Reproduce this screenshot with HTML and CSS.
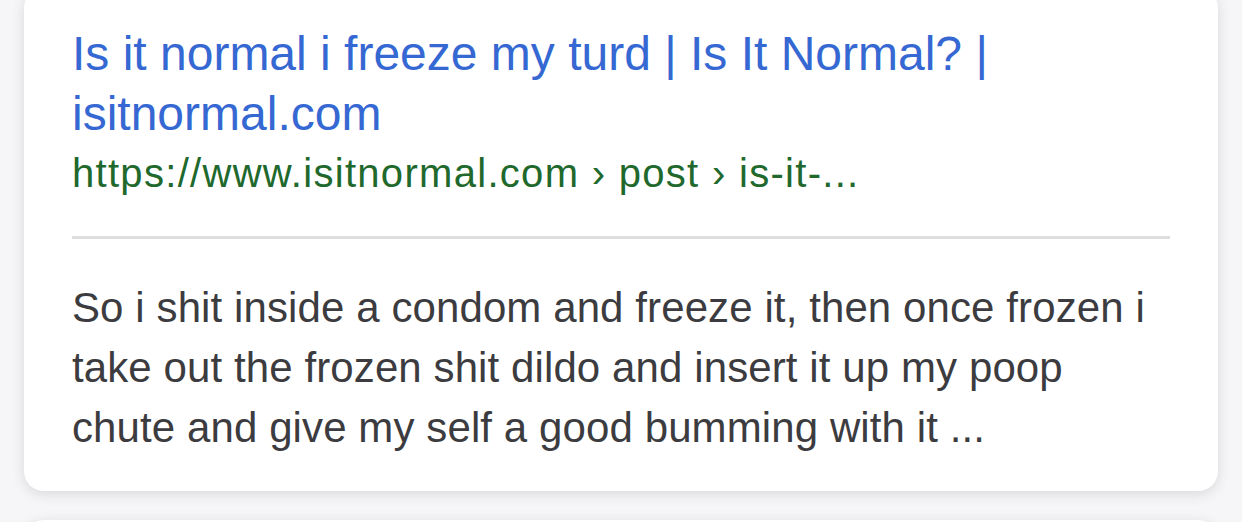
FILE: index.html
```html
<!DOCTYPE html>
<html lang="en">
<head>
<meta charset="utf-8">
<link rel="stylesheet" href="styles.css">
<title>Result</title>
</head>
<body>
<div class="page">
  <div class="card">
    <a class="title" href="#">Is it normal i freeze my turd | Is It Normal? | isitnormal.com</a>
    <div class="url">https://www.isitnormal.com › post › is-it-...</div>
    <hr class="divider">
    <p class="snippet">So i shit inside a condom and freeze it, then once frozen i take out the frozen shit dildo and insert it up my poop chute and give my self a good bumming with it ...</p>
  </div>
  <div class="card next"></div>
</div>
</body>
</html>
```

FILE: styles.css
```css
html, body {
  margin: 0;
  padding: 0;
  background: #f6f6f8;
  font-family: "Liberation Sans", Arial, sans-serif;
  overflow: hidden;
}
.page {
  display: flex;
  flex-direction: column;
  gap: 29px;
  padding: 0 24px;
  margin-top: -12px;
}
.card {
  background: #ffffff;
  border-radius: 20px;
  box-shadow: 0 3px 14px rgba(0, 0, 0, 0.12);
  padding: 36px 48px 33px 48px;
  display: flex;
  flex-direction: column;
}
.title {
  color: #3568d2;
  font-size: 48px;
  line-height: 60px;
  text-decoration: none;
}
.url {
  color: #20682c;
  font-size: 40px;
  line-height: 50px;
  letter-spacing: 1.3px;
  margin-top: 4px;
}
.divider {
  border: 0;
  height: 3px;
  background: #dedee0;
  margin: 38px 0 0 0;
}
.snippet {
  color: #3c3c40;
  font-size: 42px;
  line-height: 60px;
  letter-spacing: 0.1px;
  margin: 39px 0 0 0;
}
.next {
  height: 100px;
  padding: 0;
}
```
